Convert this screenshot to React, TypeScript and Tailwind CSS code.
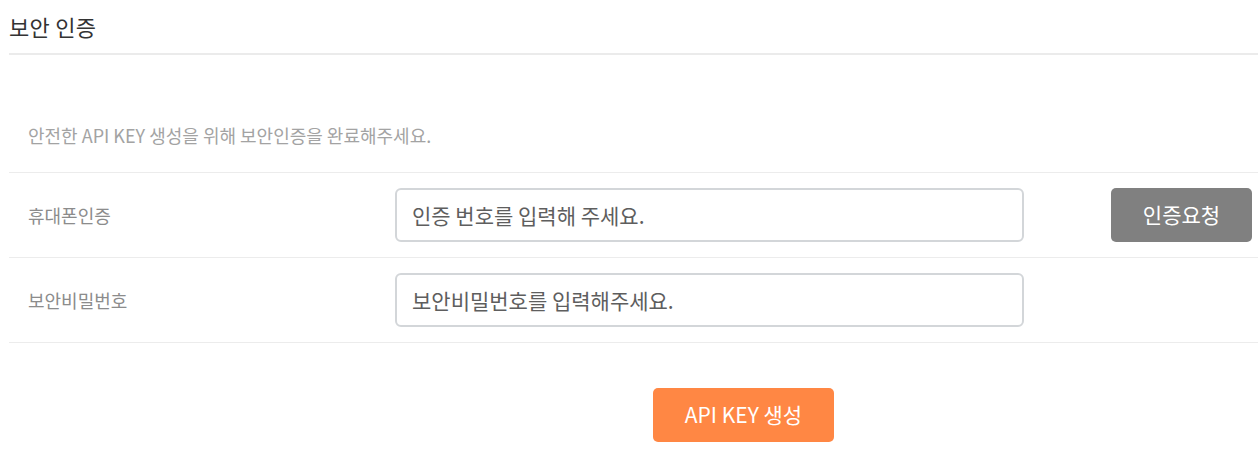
const fontStack = { fontFamily: '"Noto Sans CJK KR", "Noto Sans", sans-serif' }

const rows = [
  { label: '휴대폰인증', placeholder: '인증 번호를 입력해 주세요.', button: '인증요청' },
  { label: '보안비밀번호', placeholder: '보안비밀번호를 입력해주세요.', button: '' },
]

const App = () => {
  return (
    <div className="w-[1258px] min-h-[453px] bg-white pl-[9px] text-[#333]" style={fontStack}>
      <div className="h-[55px] pt-[11px] border-b-2 border-[#ebebeb]">
        <h2 className="text-[22px] leading-[30px] font-normal tracking-[0.3px]">보안 인증</h2>
      </div>
      <p className="pl-[19px] pt-[67px] pb-[24px] text-[18px] leading-[26px] text-[#a3a3a3] border-b border-[#ececec]">
        안전한 API KEY 생성을 위해 보안인증을 완료해주세요.
      </p>
      {rows.map((row, index) => (
        <div key={index} className="flex items-center h-[85px] border-b border-[#ececec]">
          <p className="w-[386px] pl-[19px] text-[18px] text-[#8c8c8c]">{row.label}</p>
          <input
            type="text"
            placeholder={row.placeholder}
            className="w-[629px] h-[54px] px-[15px] border-2 border-[#d3d6d9] rounded-[6px] text-[21px] text-[#5e5e5e] placeholder:text-[#5e5e5e] outline-none"
          />
          {row.button && (
            <button className="ml-[87px] w-[141px] h-[54px] rounded-[5px] bg-[#808080] text-white text-[21px]">
              {row.button}
            </button>
          )}
        </div>
      ))}
      <div className="pt-[45px]">
        <button className="ml-[644px] w-[181px] h-[54px] rounded-[5px] bg-[#ff8744] text-white text-[21px]">
          API KEY 생성
        </button>
      </div>
    </div>
  )
}

export default App
